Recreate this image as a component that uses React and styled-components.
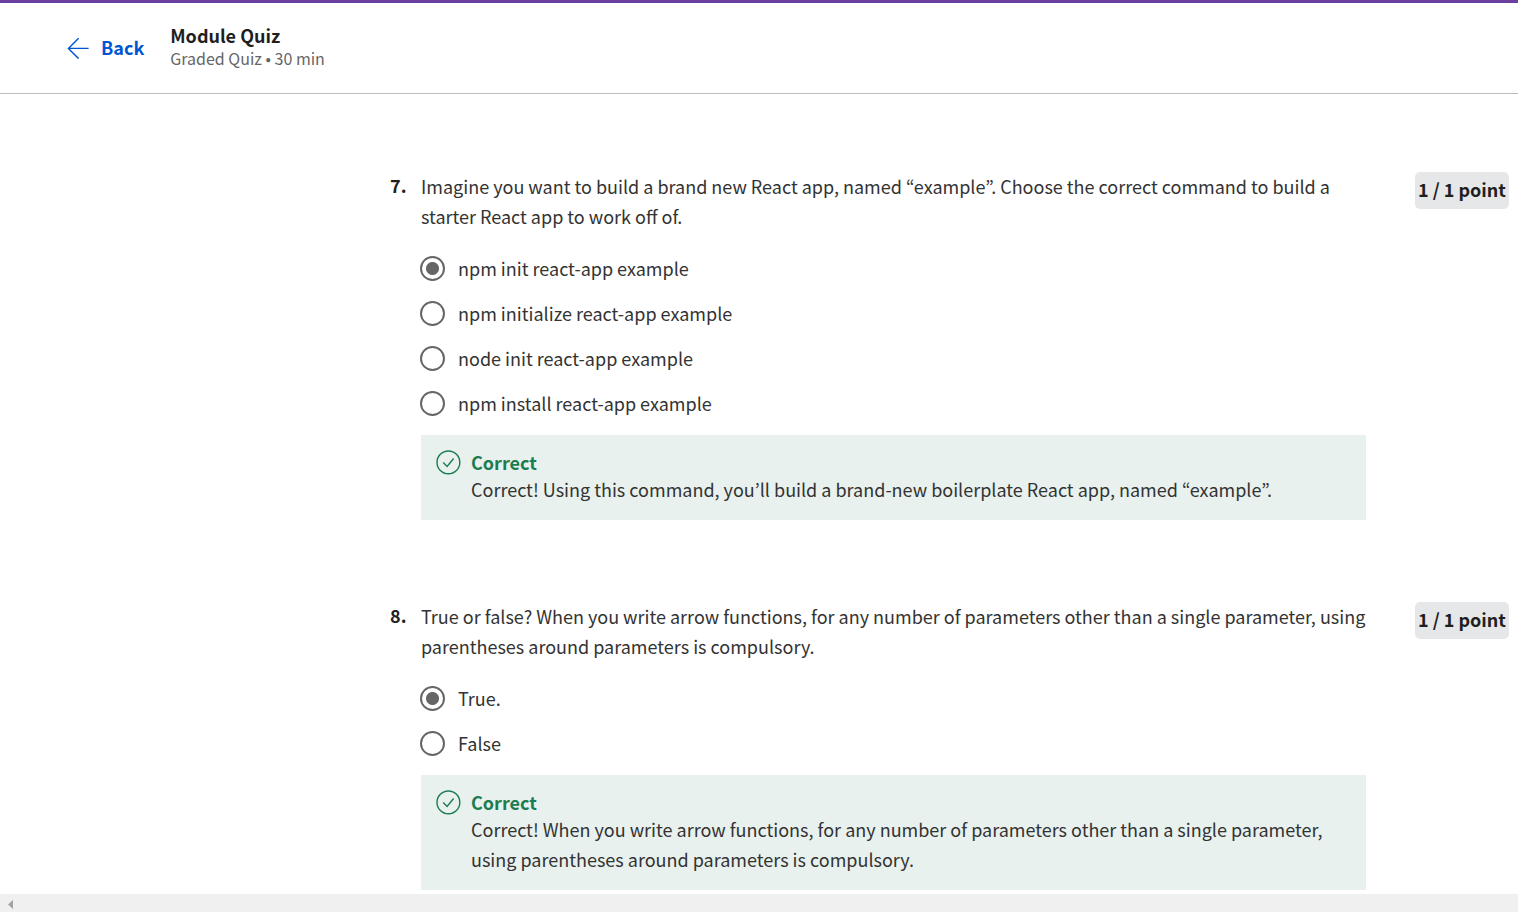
import React from "react";
import styled, { createGlobalStyle } from "styled-components";

const GlobalStyle = createGlobalStyle`
  *, *::before, *::after { box-sizing: border-box; }
  body {
    margin: 0;
    background: #fff;
    color: #1f1f1f;
    font-family: "Source Sans Pro", "Noto Sans CJK KR", "Noto Sans", sans-serif;
    font-size: 18px;
    line-height: 30px;
  }
`;

const Page = styled.div`
  display: flex;
  flex-direction: column;
  height: 100vh;
  overflow: hidden;
  border-top: 3px solid #6b3fa0;
`;

const Header = styled.header`
  display: flex;
  align-items: center;
  flex: none;
  gap: 26px;
  padding: 21px 66px 23px;
  border-bottom: 1px solid #bdbdbd;
`;

const BackLink = styled.a`
  display: flex;
  align-items: center;
  gap: 11px;
  color: #0056d2;
  font-weight: 600;
  text-decoration: none;
`;

const Title = styled.h1`
  margin: 0;
  font-size: 18px;
  font-weight: 600;
  line-height: 22px;
`;

const Subtitle = styled.p`
  margin: 0;
  color: #666;
  font-size: 16px;
  line-height: 24px;
`;

const Main = styled.main`
  display: flex;
  flex-direction: column;
  flex: 1;
  gap: 81px;
  min-height: 0;
  padding: 77px 9px 0 390px;
  overflow: hidden;
`;

const QuestionRow = styled.section`
  display: flex;
  align-items: flex-start;
  flex: none;
`;

const Number = styled.span`
  flex: none;
  width: 31px;
  font-weight: 600;
  line-height: 28px;
`;

const Body = styled.fieldset`
  flex: 1;
  min-width: 0;
  margin: 0;
  padding: 0;
  border: 0;
  color: #333;
`;

const Prompt = styled.legend`
  padding: 0;
`;

const Options = styled.div`
  display: flex;
  flex-direction: column;
  margin: 15px 0 9px;
`;

const Option = styled.label`
  display: flex;
  align-items: center;
  gap: 13px;
  height: 45px;
  margin-left: -1px;
`;

const OptionText = styled.span`
  padding-bottom: 2px;
`;

const Radio = styled.input`
  appearance: none;
  flex: none;
  width: 25px;
  height: 25px;
  margin: 0;
  border: 2px solid #666;
  border-radius: 50%;
  background: #fff;

  &:checked {
    background: radial-gradient(circle, #666 6px, #fff 7px);
  }
`;

const Points = styled.span`
  flex: none;
  width: 94px;
  margin: 1px 0 0 49px;
  padding-bottom: 2px;
  border-radius: 5px;
  background: #e5e7e8;
  font-weight: 600;
  line-height: 35px;
  text-align: center;
  white-space: nowrap;
`;

const Feedback = styled.div`
  display: flex;
  align-items: flex-start;
  gap: 10px;
  padding: 15px 15px 16px;
  background: #e8f1ee;
`;

const FeedbackTitle = styled.strong`
  display: block;
  color: #1d7c50;
  font-weight: 600;
  line-height: 24px;
`;

const FeedbackText = styled.p`
  margin: 0;
`;

const Icon = styled.svg`
  display: block;
  flex: none;
  fill: none;
  stroke: currentColor;
`;

const CheckIcon = styled(Icon)`
  color: #1d7c50;
`;

const ScrollTrack = styled.footer`
  display: flex;
  align-items: center;
  flex: none;
  height: 18px;
  padding: 2px 8px 0;
  background: #f0f0f0;
`;

const questions = [
  {
    number: 7,
    prompt:
      "Imagine you want to build a brand new React app, named “example”. Choose the correct command to build a starter React app to work off of.",
    options: [
      "npm init react-app example",
      "npm initialize react-app example",
      "node init react-app example",
      "npm install react-app example",
    ],
    feedback:
      "Correct! Using this command, you’ll build a brand-new boilerplate React app, named “example”.",
  },
  {
    number: 8,
    prompt:
      "True or false? When you write arrow functions, for any number of parameters other than a single parameter, using parentheses around parameters is compulsory.",
    options: ["True.", "False"],
    feedback:
      "Correct! When you write arrow functions, for any number of parameters other than a single parameter, using parentheses around parameters is compulsory.",
  },
];

function Question({ number, prompt, options, feedback }) {
  return (
    <QuestionRow>
      <Number>{number}.</Number>
      <Body>
        <Prompt>{prompt}</Prompt>
        <Options>
          {options.map((text, i) => (
            <Option key={text}>
              <Radio type="radio" name={`question-${number}`} defaultChecked={i === 0} />
              <OptionText>{text}</OptionText>
            </Option>
          ))}
        </Options>
        <Feedback>
          <CheckIcon width="25" height="25" viewBox="0 0 25 25" strokeWidth="1.4" aria-hidden="true">
            <circle cx="12.4" cy="12.4" r="11.4" />
            <path d="M7.2 12.6l3.9 3.9 6.5-8" />
          </CheckIcon>
          <div>
            <FeedbackTitle>Correct</FeedbackTitle>
            <FeedbackText>{feedback}</FeedbackText>
          </div>
        </Feedback>
      </Body>
      <Points>1 / 1 point</Points>
    </QuestionRow>
  );
}

export default function App() {
  return (
    <>
      <GlobalStyle />
      <Page>
        <Header>
          <BackLink href="#">
            <Icon width="24" height="24" viewBox="0 0 24 24" strokeWidth="1.4" aria-hidden="true">
              <path d="M12.6 3.2L2.4 13.4l10.2 10.2M2.4 13.4h20.2" />
            </Icon>
            Back
          </BackLink>
          <div>
            <Title>Module Quiz</Title>
            <Subtitle>Graded Quiz • 30 min</Subtitle>
          </div>
        </Header>
        <Main>
          {questions.map((q) => (
            <Question key={q.number} {...q} />
          ))}
        </Main>
        <ScrollTrack>
          <svg width="5" height="9" viewBox="0 0 5 9" fill="#a3a3a3" aria-hidden="true">
            <path d="M5 0v9L0 4.5z" />
          </svg>
        </ScrollTrack>
      </Page>
    </>
  );
}
